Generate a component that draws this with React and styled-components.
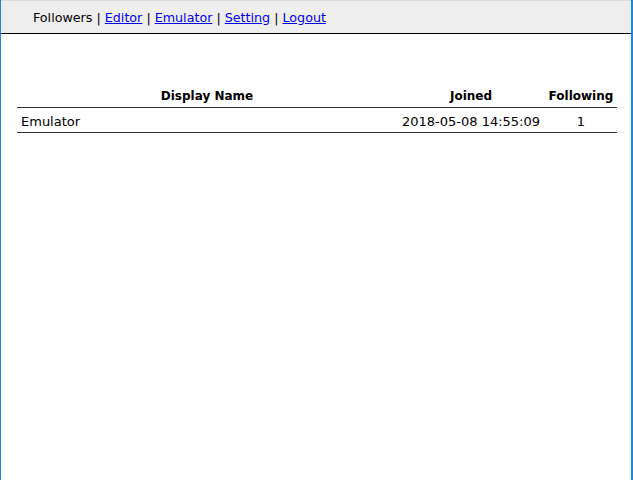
import React from "react";
import styled, { createGlobalStyle } from "styled-components";

const GlobalStyle = createGlobalStyle`
  html, body {
    margin: 0;
    padding: 0;
    background: #ffffff;
    font-family: Verdana, "DejaVu Sans", sans-serif;
    font-size: 13px;
    color: #000;
  }
`;

const followers = [
  { name: "Emulator", joined: "2018-05-08 14:55:09", following: 1 },
];

const navItems = [
  { label: "Followers", current: true },
  { label: "Editor" },
  { label: "Emulator" },
  { label: "Setting" },
  { label: "Logout" },
];

export default function App() {
  return (
    <>
      <GlobalStyle />
      <Frame>
        <TopBar>
          {navItems.map((item, i) => (
            <React.Fragment key={item.label}>
              {i > 0 && " | "}
              {item.current ? (
                <Current>{item.label}</Current>
              ) : (
                <NavLink href="#">{item.label}</NavLink>
              )}
            </React.Fragment>
          ))}
        </TopBar>

        <Content>
          <Table>
            <colgroup>
              <col style={{ width: 380 }} />
              <col style={{ width: 148 }} />
              <col style={{ width: 72 }} />
            </colgroup>
            <thead>
              <tr>
                <Th>Display Name</Th>
                <Th>Joined</Th>
                <Th>Following</Th>
              </tr>
            </thead>
            <tbody>
              {followers.map((f) => (
                <tr key={f.name}>
                  <Td $align="left">{f.name}</Td>
                  <Td $align="center">{f.joined}</Td>
                  <Td $align="center">{f.following}</Td>
                </tr>
              ))}
            </tbody>
          </Table>
        </Content>
      </Frame>
    </>
  );
}

const Frame = styled.div`
  box-sizing: border-box;
  height: 480px;
  border-left: 1px solid #1a88e6;
  border-right: 2px solid #1a88e6;
  display: flex;
  flex-direction: column;
`;

const TopBar = styled.div`
  box-sizing: border-box;
  height: 34px;
  background: #eeeeee;
  border-top: 1px solid #dcdcdc;
  border-bottom: 1px solid #000;
  padding: 9px 0 0 32px;
  white-space: pre;
  font-size: 12.7px;
  line-height: 16px;
`;

const Current = styled.span`
  color: #000;
`;

const NavLink = styled.a`
  color: #0000ee;
  text-decoration: underline;
`;

const Content = styled.div`
  padding: 50px 0 0 16px;
`;

const Table = styled.table`
  width: 600px;
  table-layout: fixed;
  border-collapse: collapse;
`;

const Th = styled.th`
  font-size: 12px;
  font-weight: bold;
  text-align: center;
  padding: 5px 2px 4px;
  border-bottom: 1px solid #333;
`;

const Td = styled.td`
  text-align: ${(p) => p.$align};
  white-space: nowrap;
  padding: 6px 4px 3px;
  border-bottom: 1px solid #333;
`;
